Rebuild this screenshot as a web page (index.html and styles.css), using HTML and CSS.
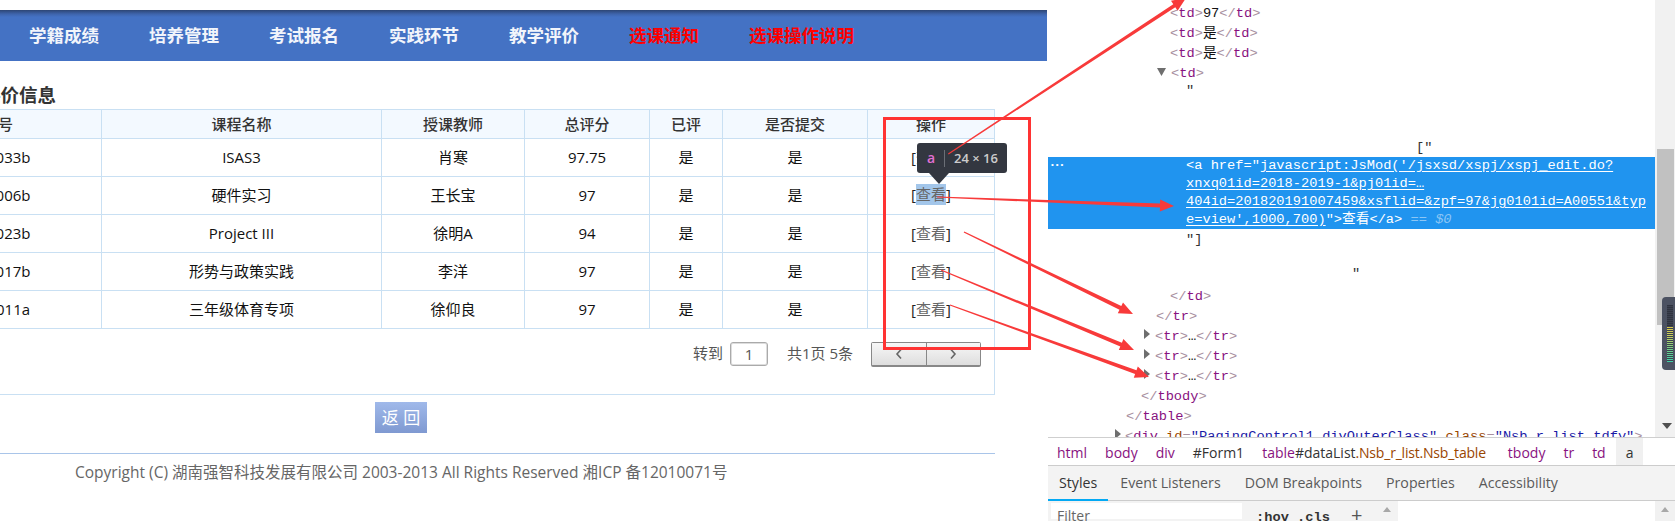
FILE: index.html
```html
<!DOCTYPE html>
<html lang="zh-CN">
<head>
<meta charset="utf-8">
<title>评价信息</title>
<link rel="stylesheet" href="styles.css">
</head>
<body>
<div class="page">
  <main class="site">
    <nav class="nav">
      <a>学籍成绩</a><a>培养管理</a><a>考试报名</a><a>实践环节</a><a>教学评价</a>
      <a class="hot">选课通知</a><a class="hot">选课操作说明</a>
    </nav>
    <h2 class="title">评价信息</h2>
    <div class="sheet">
      <table class="list">
        <colgroup><col class="c1"><col class="c2"><col class="c3"><col class="c4"><col class="c5"><col class="c6"><col class="c7"></colgroup>
        <thead><tr><th>课程编号</th><th>课程名称</th><th>授课教师</th><th>总评分</th><th>已评</th><th>是否提交</th><th>操作</th></tr></thead>
        <tbody>
          <tr><td>1807060033b</td><td>ISAS3</td><td>肖寒</td><td>97.75</td><td>是</td><td>是</td><td><span class="op">[<a>查看</a>]</span></td></tr>
          <tr><td>1807060006b</td><td>硬件实习</td><td>王长宝</td><td>97</td><td>是</td><td>是</td><td><span class="op">[<a class="picked">查看</a>]</span></td></tr>
          <tr><td>1807060023b</td><td>Project III</td><td>徐明A</td><td>94</td><td>是</td><td>是</td><td><span class="op">[<a>查看</a>]</span></td></tr>
          <tr><td>1807060017b</td><td>形势与政策实践</td><td>李洋</td><td>97</td><td>是</td><td>是</td><td><span class="op">[<a>查看</a>]</span></td></tr>
          <tr><td>1807060011a</td><td>三年级体育专项</td><td>徐仰良</td><td>97</td><td>是</td><td>是</td><td><span class="op">[<a>查看</a>]</span></td></tr>
        </tbody>
      </table>
      <div class="paging">
        <span>转到</span><span class="pageno">1</span><span class="total">共1页 5条</span>
        <span class="pager">
          <span class="pg"><svg width="10" height="12" viewBox="0 0 10 12"><path d="M7 1.5 3 6l4 4.5" fill="none" stroke="#666" stroke-width="1.6"/></svg></span>
          <span class="pg"><svg width="10" height="12" viewBox="0 0 10 12"><path d="M3 1.5 7 6l-4 4.5" fill="none" stroke="#666" stroke-width="1.6"/></svg></span>
        </span>
      </div>
    </div>
    <div class="back"><button class="backbtn">返 回</button></div>
    <footer class="foot">Copyright (C) 湖南强智科技发展有限公司 2003-2013 All Rights Reserved 湘ICP 备12010071号</footer>
  </main>

  <aside class="dev">
    <div class="elements">
      <div class="tree">
        <div class="l d0">&lt;<i>td</i>&gt;<b>97</b>&lt;/<i>td</i>&gt;</div>
        <div class="l d0">&lt;<i>td</i>&gt;<b>是</b>&lt;/<i>td</i>&gt;</div>
        <div class="l d0">&lt;<i>td</i>&gt;<b>是</b>&lt;/<i>td</i>&gt;</div>
        <div class="l d0t"><span class="tw down"></span>&lt;<i>td</i>&gt;</div>
        <div class="l d1 txt quote">"</div>
        <div class="l d2 txt">["</div>
        <div class="sel">
          <span class="dots">•••</span>
          <div class="sl">&lt;a href="<u>javascript:JsMod('/jsxsd/xspj/xspj_edit.do?</u></div>
          <div class="sl"><u>xnxq01id=2018-2019-1&amp;pj01id=…</u></div>
          <div class="sl"><u>404id=201820191007459&amp;xsflid=&amp;zpf=97&amp;jg0101id=A00551&amp;typ</u></div>
          <div class="sl"><u>e=view',1000,700)</u>"&gt;查看&lt;/a&gt; <em>== $0</em></div>
        </div>
        <div class="l d1 txt after">"]</div>
        <div class="l d3 txt">"</div>
        <div class="l d0 close1">&lt;/<i>td</i>&gt;</div>
        <div class="l d4">&lt;/<i>tr</i>&gt;</div>
        <div class="l d4t"><span class="tw right"></span>&lt;<i>tr</i>&gt;<b>…</b>&lt;/<i>tr</i>&gt;</div>
        <div class="l d4t"><span class="tw right"></span>&lt;<i>tr</i>&gt;<b>…</b>&lt;/<i>tr</i>&gt;</div>
        <div class="l d4t"><span class="tw right"></span>&lt;<i>tr</i>&gt;<b>…</b>&lt;/<i>tr</i>&gt;</div>
        <div class="l d5">&lt;/<i>tbody</i>&gt;</div>
        <div class="l d6">&lt;/<i>table</i>&gt;</div>
        <div class="l d7t"><span class="tw right"></span>&lt;<i>div</i> <i class="an">id</i>=<i class="av">"PagingControl1_divOuterClass"</i> <i class="an">class</i>=<i class="av">"Nsb_r_list tdfy"</i>&gt;</div>
      </div>
      <div class="vbar">
        <div class="thumb"></div>
        <span class="vdown"></span>
      </div>
    </div>
    <div class="crumbs">
      <span class="cr">html</span><span class="cr">body</span><span class="cr">div</span><span class="cr plain">#Form1</span>
      <span class="cr">table<span class="plain">#dataList</span><span class="cls">.Nsb_r_list.Nsb_table</span></span>
      <span class="cr">tbody</span><span class="cr">tr</span><span class="cr">td</span><span class="cr cur">a</span>
    </div>
    <div class="tabs">
      <span class="tab on">Styles</span><span class="tab">Event Listeners</span><span class="tab">DOM Breakpoints</span><span class="tab">Properties</span><span class="tab">Accessibility</span>
    </div>
    <div class="filter">
      <div class="fleft">
        <span class="finput">Filter</span>
        <span class="ftools">:hov .cls</span>
        <span class="fplus">+</span>
        <span class="fup"></span>
      </div>
      <div class="fright"><span class="fbar"><span class="fup"></span></span></div>
    </div>
  </aside>

  <div class="mark-box"></div>
  <div class="tip"><span class="tip-a">a</span><span class="tip-size">24 × 16</span></div>
  <div class="tip-arrow"></div>
  <svg class="arrows" width="1675" height="521" viewBox="0 0 1675 521">
    <polygon points="948,153.4 1173.3,4.2 1171,.7 1186,-2 1177.6,10.7 1175.3,7.2 948.6,154.4"/>
    <polygon points="937,196.4 1160,203.5 1160.2,199.5 1174,206 1159.8,211.5 1160,207.5 937,197.6"/>
    <polygon points="964.3,231.5 1121.3,306.1 1123,302.5 1133,314 1117.8,313.3 1119.5,309.7 963.7,232.5"/>
    <polygon points="941.2,269.5 1121.9,342.8 1123.4,339.1 1134,350 1118.8,350.1 1120.3,346.5 940.8,270.5"/>
    <polygon points="950.2,304.5 1136.5,370.3 1137.8,366.6 1149,377 1133.8,377.8 1135.1,374.1 949.8,305.5"/>
  </svg>
  <div class="meter"><div class="meter-bars"></div></div>
</div>
</body>
</html>
```
FILE: styles.css
```css
* { box-sizing: border-box; }
html, body { margin: 0; padding: 0; background: #fff; }
body { width: 1675px; height: 521px; overflow: hidden; font-family: "Open Sans", "Noto Sans CJK SC", sans-serif; }
.page { position: relative; display: flex; width: 1675px; height: 521px; overflow: hidden; }

/* left: site */
.site { width: 1047px; flex: none; padding-top: 10px; overflow: hidden; }
.nav { display: flex; gap: 50px; height: 51px; padding: 0 0 3px 29px; align-items: center; font-size: 17.5px; font-weight: 700; color: #f2f5fb;
  background: linear-gradient(#2d4674 0, #3e64ab 4px, #4472c4 7px, #4472c4 100%); }
.nav a { white-space: nowrap; }
.nav .hot { color: #f00; }
.title { margin: 0 0 0 -18px; padding-top: 22px; height: 48px; font-size: 18.5px; line-height: 24px; font-weight: 700; color: #333; }

.sheet { margin-left: -136px; width: 1131px; }
.list { border-collapse: collapse; table-layout: fixed; width: 1130px; font-size: 15px; color: #111; }
.c1 { width: 237px; } .c2 { width: 280px; } .c3 { width: 143px; } .c4 { width: 125px; } .c5 { width: 73px; } .c6 { width: 145px; } .c7 { width: 127px; }
.list th, .list td { border: 1px solid #c9e0f3; text-align: center; padding: 0; }
.list th { height: 29px; background: #f3f9ff; font-weight: 500; color: #333; font-size: 15px; line-height: 20px; }
.list td { height: 38px; padding-bottom: 2px; line-height: 20px; }
.op { color: #222; }
.op a { color: #666; }
.op .picked { display: inline-block; background: #a3c6ea; line-height: 21px; }
.paging { display: flex; justify-content: flex-end; align-items: flex-start; height: 66px; padding: 13px 13px 0 0; border-right: 1px solid #c9e0f3; border-bottom: 1px solid #c9e0f3; font-size: 15px; line-height: 23px; color: #555; }
.pageno { width: 38px; height: 24px; margin-left: 7px; border: 1px solid #aaa; border-radius: 3px; text-align: center; box-shadow: inset 0 0 0 1px #ddd; }
.total { margin-left: 19px; margin-right: 18px; }
.pager { display: flex; width: 110px; height: 25px; border: 1px solid #888; border-bottom-width: 2px; border-radius: 2px; }
.pg { flex: 1; display: flex; align-items: center; justify-content: center; background: linear-gradient(#f7f7f7, #dedede); }
.pg + .pg { border-left: 1px solid #888; }

.back { padding: 7px 0 0 375px; height: 58px; }
.backbtn { display: block; width: 52px; height: 31px; padding: 0; border: 0; background: linear-gradient(#a0b9ea, #7f99d1); color: #fff; font: 17px/31px "Open Sans", "Noto Sans CJK SC", sans-serif; }
.foot { width: 995px; border-top: 1px solid #a9c5e9; padding: 8px 0 0 75px; font-size: 15.5px; line-height: 20px; color: #666; white-space: nowrap; }

/* right: devtools */
.dev { width: 628px; flex: none; display: flex; flex-direction: column; }
.elements { position: relative; display: flex; height: 437px; flex: none; overflow: hidden; padding-left: 1px; }
.tree { width: 607px; flex: none; padding-top: 4px; font: 13.7px/20px "Liberation Mono", "Noto Sans CJK SC", monospace; color: #a8909f; white-space: nowrap; }
.l { height: 20px; }
.l i { font-style: normal; color: #881280; }
.l b { font-weight: 400; color: #111; }
.l .an { color: #994500; }
.l .av { color: #1a1aa6; }
.txt { color: #333; }
.quote { height: 19px; line-height: 14px; }
.after { margin-top: 1px; }
.d0 { padding-left: 122px; }
.d0t { padding-left: 109px; }
.d1 { padding-left: 138px; }
.d2 { padding-left: 368px; margin-top: 35px; height: 19px; }
.d3 { padding-left: 304px; margin-top: 14px; }
.close1 { margin-top: 3px; }
.d4 { padding-left: 108px; }
.d4t { padding-left: 96px; }
.d5 { padding-left: 93px; }
.d6 { padding-left: 78px; }
.d7t { padding-left: 67px; }
.tw { display: inline-block; vertical-align: 1px; }
.tw.down { width: 14px; height: 0; border-top: 8px solid #6e6e6e; position: relative; background: none; clip-path: polygon(0 0, 9px 0, 4.5px 8px); }
.tw.right { width: 11px; height: 10px; background: #6e6e6e; clip-path: polygon(0 0, 6px 5px, 0 10px); }
.d7t .tw.right { width: 10px; }
.sel { position: relative; height: 72px; padding-left: 138px; background: #2094ef; color: #fff; font-size: 13.7px; line-height: 18px; }
.sl { height: 18px; }
.sel u { text-underline-offset: 2px; }
.sel em { color: #8cc6f5; }
.dots { position: absolute; left: 2px; top: -1px; font-size: 8px; letter-spacing: 0; }
.vbar { position: relative; width: 20px; flex: none; background: #f1f1f1; }
.thumb { position: absolute; left: 2px; right: 1px; top: 149px; height: 176px; background: #c1c1c1; }
.vdown { position: absolute; left: 7px; top: 423px; border: 5px solid transparent; border-top: 6px solid #505050; border-bottom: 0; }
.crumbs { display: flex; height: 29px; flex: none; margin-left: 1px; padding: 0; border-top: 1px solid #cfcfcf; border-bottom: 1px solid #ccc; font-size: 14px; line-height: 29px; color: #881280; white-space: nowrap; }
.cr { padding: 0 9px; }
.cr.plain, .plain { color: #333; }
.cls { color: #994500; letter-spacing: -.2px; margin-right: 4px; }
.cur { margin-left: 1px; padding: 0 10px; background: #f0f0f0; color: #333; }
.tabs { display: flex; height: 35px; flex: none; margin-left: 1px; background: #f3f3f3; border-bottom: 1px solid #ccc; font-size: 14.2px; line-height: 34px; color: #5a5a5a; }
.tab { padding: 0 12px; white-space: nowrap; }
.tab.on { padding: 0 11px; color: #333; border-bottom: 2px solid #03a9f4; height: 35px; }
.filter { display: flex; flex: 1; margin-left: 1px; }
.fleft { position: relative; width: 350px; background: #f3f3f3; display: flex; }
.finput { width: 191px; height: 16px; margin: 2px 0 0 3px; padding-left: 6px; background: #fff; font-size: 14px; line-height: 26px; color: #666; overflow: visible; }
.ftools { margin-left: 14px; font: 700 13.7px/34px "Liberation Mono", monospace; color: #333; }
.fplus { margin-left: 21px; font-size: 20px; line-height: 28px; color: #555; }
.fup { position: absolute; top: 6px; right: 7px; border: 4px solid transparent; border-bottom: 5px solid #a8a8a8; border-top: 0; }
.fright { flex: 1; display: flex; justify-content: flex-end; }
.fbar { position: relative; width: 20px; background: #f1f1f1; }
.fbar .fup { right: 6px; }

/* overlays */
.mark-box { position: absolute; left: 883px; top: 117px; width: 148px; height: 233px; border: 3.5px solid #f33; }
.tip { position: absolute; left: 917px; top: 143px; width: 90px; height: 30px; display: flex; align-items: center; background: #333740; border-radius: 3px; font-size: 13px; font-weight: 600; color: #ccc; white-space: nowrap; }
.tip-a { width: 27px; padding-left: 10px; line-height: 16px; color: #e26fd3; font-size: 14px; }
.tip-size { padding-left: 9px; border-left: 1px solid #6b6f76; line-height: 17px; }
.tip-arrow { position: absolute; left: 929px; top: 173px; border: 10px solid transparent; border-top: 11px solid #333740; border-bottom: 0; }
.arrows { position: absolute; left: 0; top: 0; pointer-events: none; }
.arrows polygon { fill: #f83a3a; }
.meter { position: absolute; left: 1662px; top: 297px; width: 13px; height: 73px; padding: 8px 2px 8px 5px; background: #4c5262; border-radius: 4px 0 0 4px; }
.meter-bars { height: 100%; background: repeating-linear-gradient(rgba(40,44,54,0) 0 1px, #3c414f 1px 2px), linear-gradient(#2f333f 0, #2f333f 38%, #d8c94c 38%, #c4d060 55%, #6fd08a 78%, #3fd0a8 100%); }
```
